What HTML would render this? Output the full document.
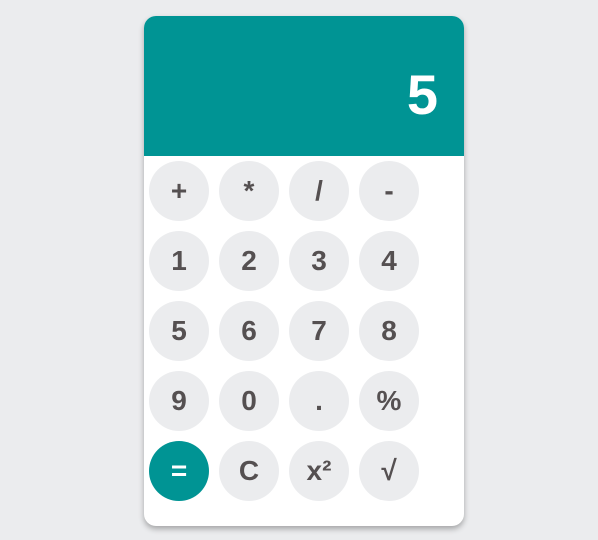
<!DOCTYPE html>
<html><head><style>
body{margin:0;width:598px;height:540px;background:#ebecee;font-family:"Liberation Sans",sans-serif;position:relative;overflow:hidden}
.card{position:absolute;left:144px;top:16px;width:320px;height:510px;background:#fff;border-radius:12px;box-shadow:0 3px 6px rgba(0,0,0,.3);overflow:hidden}
.disp{height:140px;background:#009494;color:#fff;font-weight:bold;font-size:56px;text-align:right;box-sizing:border-box;padding-right:26px;line-height:158px}
.b{position:absolute;width:60px;height:60px;border-radius:50%;background:#ebecee;color:#555051;font-weight:bold;font-size:28px;text-align:center;line-height:60px}
.eq{background:#009494;color:#fff}
</style></head><body>
<div class="card"><div class="disp">5</div>
<div class="b" style="left:5px;top:145px">+</div><div class="b" style="left:75px;top:145px">*</div><div class="b" style="left:145px;top:145px">/</div><div class="b" style="left:215px;top:145px">-</div>
<div class="b" style="left:5px;top:215px">1</div><div class="b" style="left:75px;top:215px">2</div><div class="b" style="left:145px;top:215px">3</div><div class="b" style="left:215px;top:215px">4</div>
<div class="b" style="left:5px;top:285px">5</div><div class="b" style="left:75px;top:285px">6</div><div class="b" style="left:145px;top:285px">7</div><div class="b" style="left:215px;top:285px">8</div>
<div class="b" style="left:5px;top:355px">9</div><div class="b" style="left:75px;top:355px">0</div><div class="b" style="left:145px;top:355px">.</div><div class="b" style="left:215px;top:355px">%</div>
<div class="b eq" style="left:5px;top:425px">=</div><div class="b" style="left:75px;top:425px">C</div><div class="b" style="left:145px;top:425px">x²</div><div class="b" style="left:215px;top:425px">√</div>
</div>
</body></html>
